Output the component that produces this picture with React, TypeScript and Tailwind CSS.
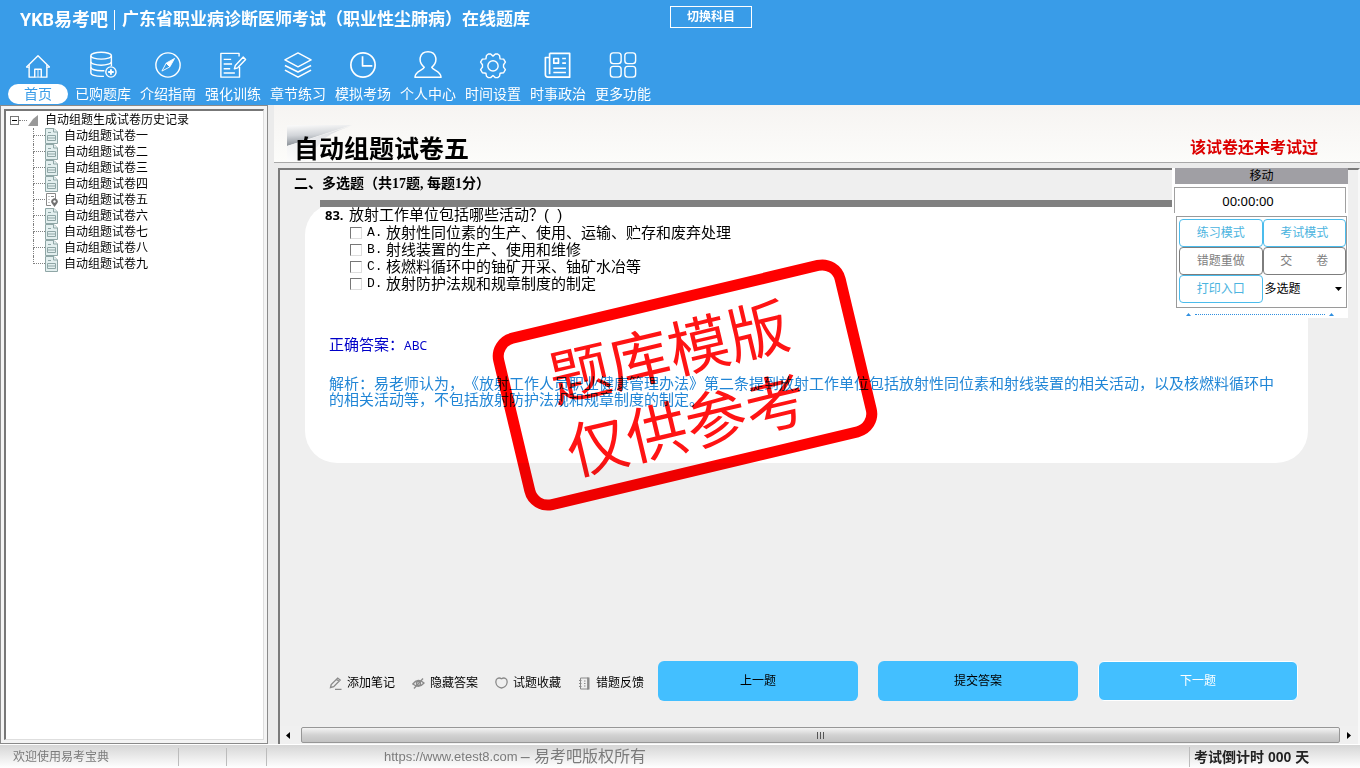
import React from "react";

const navItems: { label: string; icon: React.ReactNode }[] = [
  {
    label: "首页",
    icon: (
      <>
        <path d="M2.500 17.500 15 5l12.500 12.500" />
        <path d="M5.500 15v13h6v-8.500h7V28h6V15" />
        <path d="M15 20v8M2.500 17.500h3M24.500 17.500h3M11.500 28h7" strokeWidth="1" />
      </>
    ),
  },
  {
    label: "已购题库",
    icon: (
      <>
        <ellipse cx="13" cy="5" rx="11" ry="3.700" />
        <path d="M2 5v18.500c0 2 5 3.700 11 3.700h3M24 5v11" />
        <path d="M2 11.500c0 2 5 3.700 11 3.700s11-1.700 11-3.700M2 17.500c0 2 5 3.700 11 3.700h3.500" />
        <circle cx="23.500" cy="22.500" r="5.500" />
        <path d="M23.500 19.500v6M20.500 22.500h6" strokeWidth="2" />
      </>
    ),
  },
  {
    label: "介绍指南",
    icon: (
      <>
        <circle cx="15" cy="15" r="13" />
        <path d="m22 8-5 9-4-4z" fill="currentColor" strokeWidth="1" />
        <path d="m8.500 21.500 4.500-8.500 4 4z" strokeWidth="1" />
      </>
    ),
  },
  {
    label: "强化训练",
    icon: (
      <>
        <path d="M21.500 6V2.500H2v25.500h20V17" />
        <path d="M5 9h8M5 14h9M5 19h7M5 23.500h12" />
        <path d="m16.500 19 1-3.500L26 6.500l2.500 2.500-8.500 9z" />
      </>
    ),
  },
  {
    label: "章节练习",
    icon: (
      <>
        <path d="M15 2 29 9.500l-14 7.500L1 9.500z" />
        <path d="M1 15.500 15 22.500l14-7M1 20.500 15 28l14-7.500" strokeWidth="1.800" />
      </>
    ),
  },
  {
    label: "模拟考场",
    icon: (
      <>
        <circle cx="15" cy="15" r="13" strokeWidth="1.800" />
        <path d="M14.500 5.500V16H25" strokeWidth="1.800" />
      </>
    ),
  },
  {
    label: "个人中心",
    icon: (
      <path
        d="M11 17.500C3.500 11 6 .8 15 .8s11.500 10.200 4 16.700c1 3 10 4 10 10.700H1C1 21.500 10 20.500 11 17.500z"
        strokeWidth="1.600"
      />
    ),
  },
  {
    label: "时间设置",
    icon: (
      <>
        <circle cx="15" cy="16" r="5.500" />
        <path d="M10 3.200h2.500L15 5.500l2.500-2.300H20l2 1.600.6 3.600 3.800.3 1.900 3.300-2 2.700v2.600l2 2.700-1.900 3.300-3.800.5-.6 3.200-2 1.500h-2.500L15 26.300l-2.500 2.200H10L8 27l-.6-3.200-3.800-.5L1.700 20l2-2.700v-2.600l-2-2.700 1.900-3.300 3.800-.3L8 4.800z" />
      </>
    ),
  },
  {
    label: "时事政治",
    icon: (
      <>
        <path d="M6 2.500h21.500V28H4c-1.500 0-2.500-1-2.500-2.500V7H6M6 2.500V25" strokeWidth="1.800" />
        <path d="M10.500 8h5v5h-5zM19.500 8h4M19.500 13h4M10 18.500h13.500M10 23h13.500" strokeWidth="1.800" />
      </>
    ),
  },
  {
    label: "更多功能",
    icon: (
      <>
        <rect x="1.500" y="2" width="11.500" height="11.500" rx="3" />
        <rect x="17" y="2" width="11.500" height="11.500" rx="3" />
        <rect x="1.500" y="16.500" width="11.500" height="11.500" rx="3" />
        <rect x="17" y="16.500" width="11.500" height="11.500" rx="3" />
      </>
    ),
  },
];

const papers = ["一", "二", "三", "四", "五", "六", "七", "八", "九"];

const options = [
  ["A.", "放射性同位素的生产、使用、运输、贮存和废弃处理"],
  ["B.", "射线装置的生产、使用和维修"],
  ["C.", "核燃料循环中的铀矿开采、铀矿水冶等"],
  ["D.", "放射防护法规和规章制度的制定"],
];

const tools: { label: string; icon: React.ReactNode }[] = [
  {
    label: "添加笔记",
    icon: <path d="m1.500 10.500.7-3L8.700 1l2.500 2L4.700 9.700zM6 12.500h6.500M7.500 2.200l2.500 2" strokeWidth="1.300" />,
  },
  {
    label: "隐藏答案",
    icon: (
      <>
        <path d="M.8 7Q6 .5 12 6 7 12 .8 7z" strokeWidth="1.300" />
        <circle cx="6.500" cy="6.500" r="2" strokeWidth="1.300" />
        <path d="M2 11.500 11 1.500" strokeWidth="1.300" />
      </>
    ),
  },
  {
    label: "试题收藏",
    icon: <path d="M6.500 1.800C3.500-.2.500 2 .9 5.500c.3 3.500 3.600 5.200 5.600 5.500 2-.3 5.300-2 5.600-5.500.4-3.500-2.600-5.700-5.600-3.700z" strokeWidth="1.300" />,
  },
  {
    label: "错题反馈",
    icon: (
      <>
        <path d="M2.500 1h8v11h-8zM1 3.500h2.500M1 6.500h2.500M1 9.500h2.500M6 4h1.500M6 6.500h1.500M6 9h1.500" />
        <path d="M10.300 .5v12" strokeWidth="2.400" />
      </>
    ),
  },
];

function PaperIcon({ current }: { current: boolean }) {
  if (current) {
    return (
      <svg viewBox="0 0 13 16" className="h-4 w-[13px] shrink-0" fill="none" stroke="#888" aria-hidden="true">
        <path d="M6 13.500H1.500v-12h9V7M3.500 4.500h1M3.500 7.500h1M3.500 10.500h1M6 4.500h3" />
        <path d="M9.500 15 6.800 11.300a3.200 3.200 0 1 1 5.400 0z" fill="#707070" stroke="none" />
        <circle cx="9.500" cy="9.500" r="1.200" fill="#fff" stroke="none" />
      </svg>
    );
  }
  return (
    <svg viewBox="0 0 13 16" className="h-4 w-[13px] shrink-0" fill="#e3efef" stroke="#8fa6a6" aria-hidden="true">
      <path d="M.5.5H9L12.500 4v11.500H.5z" />
      <path d="M8.500.5V4h4M3 4.500h3M2.500 7.500h8v5h-8zM2.500 10h8" />
    </svg>
  );
}

function Sidebar() {
  return (
    <aside className="flex w-[268px] shrink-0 border border-[#8a8a8a] bg-[#f4f4f4] p-[3px]">
      <div className="flex-1 border-t-2 border-r border-b border-l-2 border-t-[#777] border-r-[#dedede] border-b-[#dedede] border-l-[#777] bg-white pt-px pl-1">
        <div className="flex h-4 items-center text-xs leading-4">
          <button type="button" aria-label="折叠" className="flex size-[9px] items-center justify-center border border-[#777] bg-white">
            <span className="h-px w-[5px] bg-black" />
          </button>
          <span className="w-2 border-t border-dotted border-[#808080]" />
          <svg viewBox="0 0 10 11" className="ml-px h-[11px] w-[10px]" aria-hidden="true">
            <path d="M10 0v11H0L5 4z" fill="#999" />
          </svg>
          <span className="ml-[7px]">自动组题生成试卷历史记录</span>
        </div>
        <ul className="pl-[23px]">
          {papers.map((n, i) => (
            <li key={n} className="flex h-4 items-center">
              <span className="flex h-4 w-3 flex-col">
                <span className="h-2 border-b border-l border-dotted border-[#808080]" />
                {i < papers.length - 1 && <span className="h-2 border-l border-dotted border-[#808080]" />}
              </span>
              <PaperIcon current={n === "五"} />
              <button type="button" className="ml-[6px] text-xs leading-4">
                自动组题试卷{n}
              </button>
            </li>
          ))}
        </ul>
      </div>
    </aside>
  );
}

function ControlPanel() {
  const base = "h-7 rounded-[4px] border bg-white text-xs";
  return (
    <section className="absolute top-[-2px] right-[10px] z-10 w-44 bg-white pl-0.5">
      <div className="ml-px h-4 bg-[#a09fa4] text-center text-xs leading-4">移动</div>
      <div className="mt-[3px] mr-0.5 h-[26px] border border-b-0 border-[#a0a0a0] pr-6 text-center font-['Noto_Sans'] text-[13px] leading-[26px]">
        00:00:00
      </div>
      <div className="mt-[3px] mr-px ml-0.5 grid h-[92px] grid-cols-2 content-start border border-[#9a9a9a] pt-0.5 pl-0.5">
        <button type="button" className={base + " border-[#4bbcec] text-[#4bb4e0]"}>练习模式</button>
        <button type="button" className={base + " border-[#4bbcec] text-[#4bb4e0]"}>考试模式</button>
        <button type="button" className={base + " border-[#7d7d7d] text-[#808080]"}>错题重做</button>
        <button type="button" className={base + " flex items-center justify-center gap-6 border-[#7d7d7d] text-[#808080]"}>
          <span>交</span>
          <span>卷</span>
        </button>
        <button type="button" className={base + " border-[#4bbcec] text-[#4bb4e0]"}>打印入口</button>
        <div className="relative flex items-center">
          <select aria-label="题型" className="h-7 w-full appearance-none bg-transparent pl-0.5 text-xs">
            <option>多选题</option>
          </select>
          <svg viewBox="0 0 7 4" className="pointer-events-none absolute right-1 h-1 w-[7px]" aria-hidden="true">
            <path d="M0 0h7L3.500 4z" />
          </svg>
        </div>
      </div>
      <div className="flex h-2.5 items-center gap-1 bg-white pt-0.5 pr-3.5 pl-3">
        <svg viewBox="0 0 5 3" className="h-[3px] w-[5px]" aria-hidden="true"><path d="M0 3 2.500 0 5 3z" fill="#2f8fe0" /></svg>
        <span className="flex-1 border-t border-dotted border-[#2f8fe0]" />
        <svg viewBox="0 0 5 3" className="h-[3px] w-[5px]" aria-hidden="true"><path d="M0 3 2.500 0 5 3z" fill="#2f8fe0" /></svg>
      </div>
    </section>
  );
}

function Stamp() {
  return (
    <div className="pointer-events-none absolute top-[124px] left-[224px] flex h-[182px] w-[362px] rotate-[-13.4deg] flex-col items-center justify-center rounded-3xl border-[11px] border-[#ff0000] pt-2 pr-4 text-[61px] leading-[75px] text-[#ff1414] mix-blend-multiply">
      <span>题库模版</span>
      <span>仅供参考</span>
    </div>
  );
}

export default function App() {
  return (
    <div className="flex min-h-screen flex-col bg-[#ebebeb] font-['Liberation_Sans','Noto_Sans_CJK_SC',sans-serif] text-black [text-spacing-trim:space-all]">
      <header className="h-[105px] bg-[#399ce8] text-white">
        <div className="flex h-10 items-center pl-5 font-bold">
          <span className="font-['Roboto','Noto_Sans_CJK_SC',sans-serif] text-lg leading-5">YKB易考吧</span>
          <span className="ml-1.5 h-5 w-px bg-white" />
          <h1 className="ml-[7px] text-[17px] leading-5">广东省职业病诊断医师考试（职业性尘肺病）在线题库</h1>
          <button type="button" className="mb-1.5 ml-[140px] h-[22px] w-[82px] border border-white text-xs font-bold">
            切换科目
          </button>
        </div>
        <nav className="flex gap-[5px] pt-[11px] pl-2">
          {navItems.map((item, i) => (
            <a key={item.label} href="#" className="flex w-[60px] flex-col items-center gap-[5px]">
              <svg viewBox="0 0 30 30" className="size-7" fill="none" stroke="currentColor" strokeWidth="1.500" strokeLinejoin="round" aria-hidden="true">
                {item.icon}
              </svg>
              <span
                className={
                  i === 0
                    ? "h-5 w-full rounded-full bg-white text-center text-sm leading-5 text-[#399ce8]"
                    : "h-5 text-sm leading-5 whitespace-nowrap"
                }
              >
                {item.label}
              </span>
            </a>
          ))}
        </nav>
      </header>

      <div className="flex flex-1">
        <Sidebar />
        <main className="ml-1.5 flex min-w-0 flex-1 flex-col">
          <div className="relative flex h-[58px] items-end justify-between border-b border-[#a8a8a8] bg-linear-to-b from-[#f6f4f2] to-[#fcfcfa] pr-[42px] pl-5">
            <svg viewBox="0 0 66 36" className="absolute top-5 left-[13px] h-9 w-[66px]" aria-hidden="true">
              <defs>
                <linearGradient id="fold" x1=".3" y1="0" x2=".45" y2=".9">
                  <stop offset="0" stopColor="#f8f8f8" />
                  <stop offset=".5" stopColor="#d2d5d9" />
                  <stop offset="1" stopColor="#8e949b" />
                </linearGradient>
                <linearGradient id="shade" x1="1" y1="0" x2="0" y2="1">
                  <stop offset="0" stopColor="#d8dade" />
                  <stop offset="1" stopColor="#fcfcfc" />
                </linearGradient>
              </defs>
              <path d="M0 0h65L0 21z" fill="url(#fold)" />
              <path d="M0 21 64 1Q42 8 34 17L18 36H0z" fill="url(#shade)" />
            </svg>
            <h2 className="relative text-[25px] leading-[26px] font-bold">自动组题试卷五</h2>
            <p className="pb-1 text-base leading-5 font-bold text-[#dc0000]">该试卷还未考试过</p>
          </div>

          <div className="relative mt-[5px] ml-1 flex flex-1 flex-col border-t-2 border-r-2 border-l-2 border-t-[#7a7a7a] border-r-[#f8f8f8] border-l-[#7a7a7a] bg-[#efefef]">
            <div className="flex flex-1 flex-col pb-[25px]">
              <h3 className="px-[14px] pt-1 font-['Liberation_Serif','Noto_Sans_CJK_SC',serif] text-[14px] leading-5 font-bold">
                二、多选题（共17题, 每题1分）
              </h3>
              <div className="relative mt-1.5 mr-[180px] ml-10 h-[7px] bg-[#808080]" />
              <section className="-mt-1 mr-[50px] ml-[25px] min-h-[260px] rounded-[32px] bg-white pl-5">
                <fieldset className="pt-1 text-[15px]">
                  <legend className="float-left w-full leading-4">
                    <b className="inline-block w-6 font-['Noto_Sans'] text-[13px]">83.</b>
                    放射工作单位包括哪些活动？(&nbsp; )
                  </legend>
                  <div className="clear-both pt-px pl-[25px]">
                    {options.map(([k, text]) => (
                      <label key={k} className="flex h-[17px] items-center leading-[17px]">
                        <input
                          type="checkbox"
                          className="size-3 appearance-none border border-t-[#777] border-r-[#ddd] border-b-[#ddd] border-l-[#777] bg-white checked:bg-[#399ce8]"
                        />
                        <span className="ml-[5px] w-[19px] font-['Liberation_Mono'] text-[13px]">{k}</span>
                        <span>{text}</span>
                      </label>
                    ))}
                  </div>
                </fieldset>
                <p className="mt-[45px] pl-1 text-[15px] leading-4 text-[#0000c8]">
                  正确答案：<span className="font-['Noto_Sans'] text-xs">ABC</span>
                </p>
                <p className="mt-[22px] mr-7 pl-1 text-[15px] leading-4 text-[#2186d6]">
                  解析：易老师认为，《放射工作人员职业健康管理办法》第二条提到放射工作单位包括放射性同位素和射线装置的相关活动，以及核燃料循环中的相关活动等，不包括放射防护法规和规章制度的制定。
                </p>
              </section>

              <div className="mt-auto flex items-center pr-[60px] pl-[49px]">
                <div className="flex gap-[17px]">
                  {tools.map((t) => (
                    <button key={t.label} type="button" className="flex w-[66px] items-center gap-[5px] pt-1 text-xs whitespace-nowrap">
                      <svg viewBox="0 0 13 13" className="size-[13px] shrink-0" fill="none" stroke="#8a8a8a" aria-hidden="true">
                        {t.icon}
                      </svg>
                      {t.label}
                    </button>
                  ))}
                </div>
                <div className="ml-[14px] grid flex-1 grid-cols-3 gap-5">
                  <button type="button" className="h-10 rounded-md bg-[#43bfff] text-xs">上一题</button>
                  <button type="button" className="h-10 rounded-md bg-[#43bfff] text-xs">提交答案</button>
                  <button type="button" className="h-10 rounded-md border border-white bg-[#43bfff] text-xs text-white">下一题</button>
                </div>
              </div>
            </div>

            <div className="flex h-[18px] items-center bg-[#f0f0f0]">
              <button type="button" aria-label="向左滚动" className="flex w-[21px] justify-center pr-1.5">
                <svg viewBox="0 0 4 7" className="h-[7px] w-1" aria-hidden="true"><path d="M4 0v7L0 3.500z" /></svg>
              </button>
              <div className="flex h-4 flex-1 items-center justify-center gap-0.5 rounded-xs border border-[#979797] bg-linear-to-b from-[#f4f4f4] via-[#d2d2d2] to-[#c2c2c2]">
                <span className="h-[7px] w-px bg-[#555]" />
                <span className="h-[7px] w-px bg-[#555]" />
                <span className="h-[7px] w-px bg-[#555]" />
              </div>
              <button type="button" aria-label="向右滚动" className="flex w-[18px] justify-center">
                <svg viewBox="0 0 4 7" className="h-[7px] w-1" aria-hidden="true"><path d="M0 0v7l4-3.500z" /></svg>
              </button>
            </div>

            <ControlPanel />
            <Stamp />
          </div>
        </main>
      </div>

      <footer className="flex h-6 items-center border-t border-white bg-linear-to-b from-[#d6d6d6] to-white text-[#7b7b7b]">
        <span className="w-[178px] pl-[13px] text-xs">欢迎使用易考宝典</span>
        <span className="h-[18px] w-12 border-l border-[#bcbcbc]" />
        <span className="h-[18px] w-10 border-l border-[#bcbcbc]" />
        <span className="h-[18px] w-[118px] border-l border-[#bcbcbc]" />
        <span className="flex items-center gap-[3px] leading-5">
          <a href="https://www.etest8.com" className="text-[13px]">https://www.etest8.com</a>
          <span className="text-base leading-5">– 易考吧版权所有</span>
        </span>
        <span className="ml-auto w-[171px] border-l border-[#bcbcbc] pl-1 text-sm leading-5 font-bold text-[#222]">
          考试倒计时 000 天
        </span>
      </footer>
    </div>
  );
}
